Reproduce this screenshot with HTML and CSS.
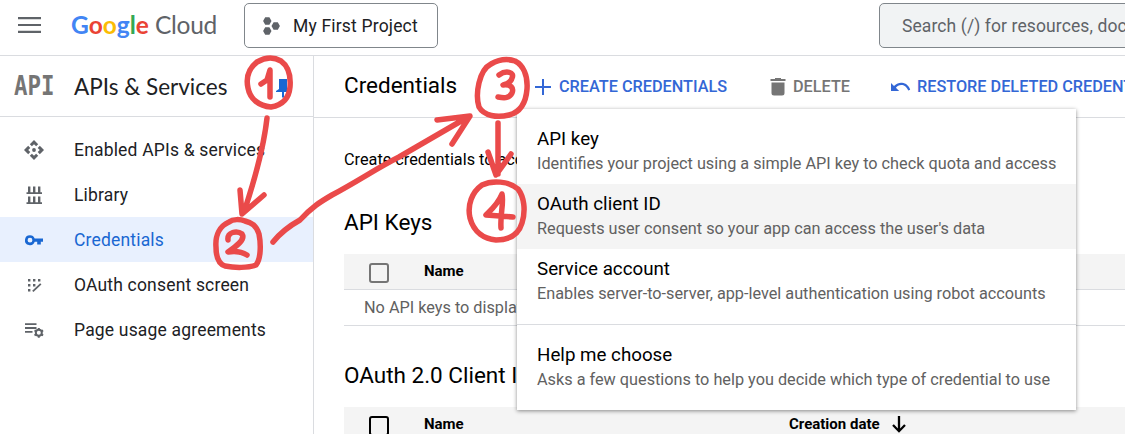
FILE: index.html
```html
<!DOCTYPE html>
<html lang="en">
<head>
<meta charset="utf-8">
<title>Credentials – APIs &amp; Services</title>
<link rel="stylesheet" href="styles.css">
</head>
<body>
<div class="page">
  <header class="topbar">
    <svg class="burger" viewBox="0 0 23 16"><path d="M0 1.2h23M0 8h23M0 14.8h23"/></svg>
    <div class="logo"><span class="google"><i class="b">G</i><i class="r">o</i><i class="y">o</i><i class="b">g</i><i class="g">l</i><i class="r">e</i></span><span class="cloud">Cloud</span></div>
    <button class="project"><svg viewBox="0 0 17 18"><path d="M2.2.2h4.200l2.100 3.800-2.100 3.800H2.200L.1 4zM2.200 10.200h4.200l2.100 3.800-2.100 3.800H2.200L.1 14zM10.600 5.200h4.200L16.900 9l-2.100 3.800h-4.200L8.500 9z"/></svg><span>My First Project</span></button>
    <div class="search">Search (/) for resources, docs, products, and more</div>
  </header>
  <div class="body">
    <aside class="side">
      <div class="side-head">
        <span class="api"><span>API</span></span>
        <span class="side-title">APIs &amp; Services</span>
        <svg class="pin" viewBox="0 0 14 20"><path d="M3 1h8v10l2 2v1H8v5l-1 1-1-1v-5H0v-1l3-2z"/></svg>
      </div>
      <nav>
        <a class="item"><svg viewBox="0 0 20 20"><path d="M10 0l4.200 4.200-2.100 2.100L10 4.200 7.900 6.300 5.800 4.200zM10 20l-4.200-4.200 2.100-2.100 2.100 2.100 2.100-2.100 2.100 2.100zM0 10l4.200-4.200 2.100 2.100L4.200 10l2.100 2.100-2.100 2.100zM20 10l-4.200 4.200-2.100-2.100 2.100-2.100-2.100-2.100 2.100-2.100z"/><circle cx="10" cy="10" r="1.900"/></svg><span>Enabled APIs &amp; services</span></a>
        <a class="item"><svg viewBox="0 0 20 20"><path d="M2.500 7.300h15.500v1.700H2.500zM4 1.500h2.400v6H4zM9 1.500h2.400v6H9zM14 1.500h2.400v6H14zM2.500 17.300h15.500V19H2.500zM4 11.500h2.400v6H4zM9 11.500h2.400v6H9zM14 11.500h2.400v6H14z"/></svg><span>Library</span></a>
        <a class="item on"><svg viewBox="0 0 20 20"><path fill-rule="evenodd" d="M6 5.200a5 5 0 1 0 4.700 6.600h2.500v2.600h3.600v-2.600H19V8.600h-8.300A5 5 0 0 0 6 5.200zM6 7.800a2.400 2.400 0 1 1 0 4.800 2.400 2.400 0 0 1 0-4.800z"/></svg><span>Credentials</span></a>
        <a class="item"><svg viewBox="0 0 20 20"><path d="M4 4h2.400v2.400H4zM9 4h2.400v2.400H9zM14 4h2.400v2.400H14zM4 9h2.400v2.400H4zM9 9h2.400v2.400H9zM4 14h2.400v2.400H4z"/><path class="ln" d="M8.800 16.400l8-7.600"/></svg><span>OAuth consent screen</span></a>
        <a class="item"><svg viewBox="0 0 20 20"><path d="M1 3.200h11.500v1.900H1zM1 7h11.500v1.900H1zM1 10.900h7.500v1.900H1z"/><circle class="gear" cx="14.800" cy="12.800" r="3"/><path class="teeth" d="M14.800 7.900v2M14.800 15.700v2M10.500 10.300l1.800 1M17.300 14.300l1.800 1M10.500 15.300l1.800-1M17.300 11.300l1.800-1"/></svg><span>Page usage agreements</span></a>
      </nav>
    </aside>
    <main class="main">
      <div class="actions">
        <h1>Credentials</h1>
        <span class="act create"><svg viewBox="0 0 16 16"><path d="M7 0h2v7h7v2H9v7H7V9H0V7h7z"/></svg><b>CREATE CREDENTIALS</b></span>
        <span class="act delete"><svg viewBox="0 0 16 18"><path d="M5 0h6v1h4.500v2H.5V1H5zM1.500 4.500h13V15a2.500 2.500 0 0 1-2.500 2.500H4A2.500 2.500 0 0 1 1.500 15z"/></svg><b>DELETE</b></span>
        <span class="act restore"><svg viewBox="0 0 20 10"><path d="M0 1l3 3c3-3 6-3.500 8-3.200 4 .4 7 3 8.200 7L17.200 8.500C15.500 4.500 13 3.200 10.500 3.100 8 3 6.500 4 4.900 5.700L8.200 9H0z"/></svg><b>RESTORE DELETED CREDENTIALS</b></span>
      </div>
      <div class="content">
        <p class="intro">Create credentials to access your enabled APIs</p>
        <h2 class="keys">API Keys</h2>
        <div class="thead"><i class="box"></i><strong>Name</strong></div>
        <div class="empty">No API keys to display</div>
        <h2 class="oauth">OAuth 2.0 Client IDs</h2>
        <div class="thead second"><i class="box dark"></i><strong>Name</strong><strong class="date">Creation date</strong><svg class="down" viewBox="0 0 14 17"><path d="M7 0v15M1 9l6 6.200L13 9"/></svg></div>
      </div>
    </main>
  </div>
  <div class="menu">
    <div class="opt"><b>API key</b><span>Identifies your project using a simple API key to check quota and access</span></div>
    <div class="opt hover"><b>OAuth client ID</b><span>Requests user consent so your app can access the user's data</span></div>
    <div class="opt"><b>Service account</b><span>Enables server-to-server, app-level authentication using robot accounts</span></div>
    <div class="rule"></div>
    <div class="opt"><b>Help me choose</b><span>Asks a few questions to help you decide which type of credential to use</span></div>
  </div>
  <svg class="marks" viewBox="0 0 1125 434">
    <path d="M257 62C247 70 246 79 248 88C250 99 259 106 271 107C283 105 289 98 290 87C291 75 288 66 281 61C272 56 264 58 257 62Z"/>
    <path d="M261 84L267 80L270 70L270 97"/>
    <path d="M267 118C264 145 257 173 244 212M240 190L242 214L264 195"/>
    <path d="M229 222C220 226 215 235 216 247C216 258 219 264 225 266C235 268 248 268 256 265C261 259 261 244 259 234C256 225 252 223 245 221C240 219 233 219 229 222Z"/>
    <path d="M228 240C227 232 237 230 242 234C246 240 235 247 228 252Q239 250 247 255"/>
    <path d="M273 242C281 232 291 225 300 220C312 207 320 202 332 195C360 180 377 168 399 157L468 117M437 120L470 116L452 144"/>
    <path d="M491 64C479 70 475 94 479 107C484 116 497 118 509 115C521 112 526 102 527 89C528 75 523 65 515 61C506 58 498 60 491 64Z"/>
    <path d="M499 75C506 70 515 72 512 78C511 83 506 84 503 85C511 84 514 88 512 93C509 99 503 98 498 97"/>
    <path d="M498 123L498 174M488 152L496 175L511 154"/>
    <path d="M482 185C472 192 467 205 470 218C474 233 485 239 496 240C511 240 519 233 522 223C526 210 524 197 518 189C509 181 492 180 482 185Z"/>
    <path d="M501 228C500 214 504 203 502 194C498 204 492 209 486 215L513 217"/>
  </svg>
</div>
</body>
</html>
```

FILE: styles.css
```css
* { box-sizing: border-box; }
body { margin: 0; background: #fff; color: #000; font-family: Roboto, "Liberation Sans", sans-serif; font-size: 17.5px; }
.page { position: relative; width: 1125px; height: 434px; overflow: hidden; white-space: nowrap; }
svg { display: block; flex: none; fill: currentColor; }
i { font-style: normal; }
h1, h2, p { margin: 0; font-weight: 400; }

.topbar { display: flex; height: 56px; border-bottom: 1px solid #dadce0; }
.burger { width: 23px; height: 16px; margin: 17px 30px 0 18px; fill: none; stroke: #5f6368; stroke-width: 2.2; }
.logo { display: flex; flex: none; width: 173px; font: 24.5px/49px Lato, sans-serif; }
.google { width: 84px; font-weight: 700; }
.cloud { color: #5f6368; letter-spacing: -.3px; }
.b { color: #4285f4; } .r { color: #ea4335; } .y { color: #fbbc04; } .g { color: #34a853; }
.project { display: flex; align-items: center; flex: none; width: 194px; height: 45px; margin-top: 3px; padding: 0 0 0 18px; background: #fff; border: 1px solid #80868b; border-radius: 5px; font: 17.5px Roboto, sans-serif; letter-spacing: .18px; color: #202124; }
.project svg { width: 17px; height: 18px; margin-right: 13px; color: #5f6368; }
.search { flex: none; width: 600px; height: 45px; margin: 3px 0 0 441px; padding-left: 22px; background: #f1f3f4; border: 1px solid #80868b; border-radius: 5px; color: #5f6368; line-height: 44px; letter-spacing: .1px; }

.body { display: flex; height: 378px; }
.side { flex: none; width: 314px; border-right: 1px solid #dadce0; color: #202124; }
.side-head { display: flex; align-items: center; height: 61px; border-bottom: 1px solid #dadce0; }
.api { flex: none; width: 74px; padding-left: 14px; color: #757575; font: 700 27px/32px "DejaVu Sans Mono", monospace; }
.api span { display: inline-block; transform: scaleX(.83); transform-origin: left; }
.side-title { flex: none; width: 202px; font: 22.5px Lato, sans-serif; }
.pin { width: 14px; height: 20px; margin-top: 4px; color: #1967d2; }
nav { padding-top: 10px; }
.item { display: flex; align-items: center; height: 45px; padding-left: 24px; letter-spacing: .18px; }
.item svg { width: 20px; height: 20px; margin-right: 30px; color: #5f6368; }
.item.on, .item.on svg { background: #e8f0fe; color: #1967d2; }
.ln { fill: none; stroke: currentColor; stroke-width: 1.8; }
.gear { fill: none; stroke: currentColor; stroke-width: 2; }
.teeth { stroke: currentColor; stroke-width: 2; }

.main { flex: 1; min-width: 0; }
.actions { display: flex; align-items: center; height: 62px; padding-left: 30px; border-bottom: 1px solid #dadce0; }
h1 { flex: none; width: 191px; padding-bottom: 3px; font-size: 22.5px; }
.act { display: flex; align-items: center; flex: none; color: #3367d6; font-size: 16.25px; }
.act b { font-weight: 500; }
.create { width: 235px; }
.create svg { width: 16px; height: 16px; margin-right: 8px; }
.delete { width: 121px; color: #757575; }
.delete svg { width: 16px; height: 18px; margin-right: 7px; }
.restore svg { width: 20px; height: 10px; margin-right: 6px; }
.content { padding-left: 30px; }
.intro { height: 84px; line-height: 84px; font-size: 16.25px; }
h2 { font-size: 22.5px; }
.keys { height: 52px; line-height: 41px; }
.thead { display: flex; align-items: center; height: 36px; background: #f4f4f4; border-bottom: 1px solid #dadce0; font-size: 15px; }
.thead strong { flex: none; font-weight: 700; width: 365px; padding-bottom: 1px; }
.box { width: 20px; height: 20px; margin: 2px 35px 0 25px; border: 2px solid #757575; border-radius: 3px; }
.dark { border-color: #000; }
.thead .date { width: 103px; }
.down { width: 14px; height: 17px; fill: none; stroke: #000; stroke-width: 2.3; }
.empty { height: 36px; padding-left: 20px; border-bottom: 1px solid #dadce0; color: #616161; line-height: 35px; font-size: 16.25px; }
.oauth { height: 81px; line-height: 98px; }

.menu { position: absolute; left: 517px; top: 109px; width: 559px; height: 301px; padding-top: 10px; background: #fff; box-shadow: 0 1px 4px rgba(0,0,0,.45); }
.opt { display: flex; flex-direction: column; height: 65px; padding: 8px 20px 0; }
.opt b { height: 25px; font-weight: 400; font-size: 18.75px; line-height: 25px; }
.opt span { height: 24px; color: #616161; font-size: 16.25px; line-height: 24px; }
.hover { background: #f4f4f4; }
.rule { height: 1px; margin: 10px 0; background: #dadce0; }
.marks { position: absolute; left: 0; top: 0; width: 1125px; height: 434px; fill: none; stroke: #ea4a4a; stroke-width: 5.5; stroke-linecap: round; stroke-linejoin: round; pointer-events: none; }
```
